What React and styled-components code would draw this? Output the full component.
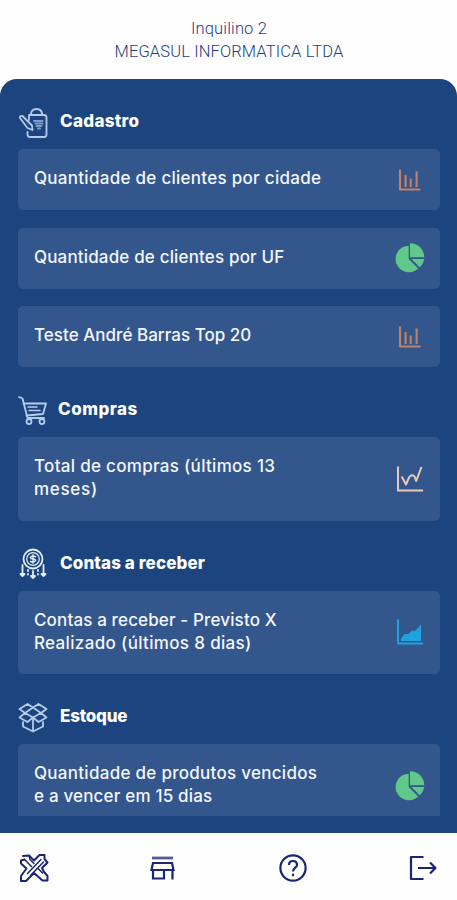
import React from 'react'
import styled, { createGlobalStyle } from 'styled-components'

const GlobalStyle = createGlobalStyle`
  * { box-sizing: border-box; }
  body {
    margin: 0;
    background: #fefefe;
    font-family: Inter, "Open Sans", sans-serif;
  }
`

const Screen = styled.div`
  display: flex;
  flex-direction: column;
  height: 900px;
  overflow: hidden;
`

const Header = styled.header`
  height: 79px;
  padding: 18px 0 0 1px;
  flex: none;
  text-align: center;
  font-family: Roboto, sans-serif;
  font-weight: 300;
  font-size: 16.5px;
  line-height: 22.5px;
  color: #1f3f7c;
`

const HeaderLine = styled.div`
  letter-spacing: ${p => p.$spacing || 0}px;
`

const Panel = styled.main`
  flex: 1;
  min-height: 0;
  padding: 0 17px 17px 18px;
  background: #1c447e;
  border-radius: 17px 17px 0 0;
`

const List = styled.div`
  height: 100%;
  overflow: hidden;
`

const SectionTitle = styled.h2`
  display: flex;
  align-items: center;
  height: 70px;
  margin: 0;
  padding-top: 17px;
  font-size: 17px;
  font-weight: 800;
  color: #fff;
  svg { flex: none; margin-right: 10px; }
`

const TitleText = styled.span`
  position: relative;
  top: -1.5px;
  left: ${p => p.$shift || 0}px;
  letter-spacing: ${p => p.$spacing || 0}px;
`

const Card = styled.div`
  display: flex;
  align-items: center;
  justify-content: space-between;
  height: ${p => (p.$tall ? 83.5 : 61)}px;
  padding: 0 14px 0 16px;
  border-radius: 5px;
  background: #33568c;
  & + & { margin-top: 17.6px; }
`

const CardText = styled.div`
  padding-bottom: 1.5px;
  font-size: 17px;
  font-weight: 500;
  line-height: 23px;
  color: #f4f7fc;
  white-space: nowrap;
`

const Line = styled.span`
  display: block;
  letter-spacing: ${p => p.$spacing || 0}px;
`

const Nav = styled.nav`
  display: flex;
  flex: none;
  align-items: center;
  justify-content: space-between;
  height: 67px;
  padding: 2px 18px 0;
  color: #1a2574;
`

const Stroke = ({ size = 32, children, ...rest }) => (
  <svg width={size} height={size} viewBox={`0 0 ${size} ${size}`} fill="none"
    stroke="currentColor" strokeWidth="1.8" strokeLinecap="round" strokeLinejoin="round" {...rest}>
    {children}
  </svg>
)

const BagIcon = () => (
  <Stroke stroke="#b5cbec">
    <path d="M11 13V8H26Q28.500 8 28.500 10.500V27.500Q28.500 30 26 30H12Q9.500 30 9.500 27.500V25" />
    <path d="M13 7.500Q13 2 18.500 2T24 7.500" />
    <path d="M2 11Q1.500 8.500 4.500 9L14 18.500L14.500 23L9.500 21Z" />
    <path d="M16 14H24.500M17.500 16.500H24.500M18.500 19H23.500M20 21.500H22" strokeWidth="2" opacity=".65" />
  </Stroke>
)

const CartIcon = () => (
  <Stroke stroke="#b5cbec">
    <path d="M1 2L4.500 3.500L9.500 23H26" />
    <path d="M5.500 8.500H28L25 19L8.500 20.500" />
    <path d="M10 12H19M11 15.500H22" strokeWidth="1.500" />
    <circle cx="11" cy="26.500" r="2.500" /><circle cx="24" cy="26.500" r="2.500" />
  </Stroke>
)

const CoinIcon = () => (
  <Stroke stroke="#e4edfa">
    <circle cx="15" cy="11" r="9.500" />
    <circle cx="15" cy="11" r="6.300" strokeWidth="1.200" />
    <path d="M17.500 8.700Q15 7.200 13 8.700T15 11T17 13.300T12.500 13.300M15 6.800V15.200" strokeWidth="1.400" />
    <path d="M4.500 17V27M2.500 26L4.500 28L6.500 26ZM25.500 17V27M23.500 26L25.500 28L27.500 26ZM15 23V29M13 28L15 30L17 28ZM10 22V23M10 26V26.500M20 22V23M20 26V26.500" />
  </Stroke>
)

const BoxIcon = () => (
  <Stroke stroke="#b5cbec">
    <path d="M1.500 7L9.500 2L15 5.500L7 11ZM28.500 7L20.500 2L15 5.500L23 11Z" />
    <path d="M7 11L1.500 15.500L9.500 20L15 15.500ZM23 11L28.500 15.500L20.500 20L15 15.500Z" />
    <path d="M5 20V24.500L15 29.500L25 24.500V20M15 17V29" />
  </Stroke>
)

const chartIcons = {
  bars: (
    <Stroke stroke="#c28165" strokeWidth="2.100" strokeLinecap="butt">
      <path d="M6 5.500V25.500H26.500M11.600 23V11M16.700 23V14.500M22.600 23V7.500" />
    </Stroke>
  ),
  pie: (
    <svg width="32" height="32" fill="#60c888">
      <path d="M14.700 3.700A13.300 13.300 0 1 0 24.200 26.500L14.700 17Z" />
      <path d="M16 1.300A14.200 14.200 0 0 1 30.300 15.300H16Z" />
      <path d="M17.400 17H30.200Q29.800 21.500 26 25.600Z" />
    </svg>
  ),
  line: (
    <Stroke stroke="#e8cabd" strokeWidth="2" strokeLinecap="butt">
      <path d="M4 3.500V27.500H29" strokeLinejoin="miter" />
      <path d="M7.700 13.500L12 21.500L15 14.500Q18 10.500 20.500 13.500L22.200 18L27.500 4" />
    </Stroke>
  ),
  area: (
    <Stroke stroke="#20a2df" strokeWidth="2" strokeLinecap="butt">
      <path d="M4 3.500V27.500H29" />
      <path d="M7 25V22.500L10.500 18L14.500 18L18 14.500L21 15L27 8.500V25Z" fill="#20a2df" stroke="none" />
    </Stroke>
  ),
}

const StoreIcon = () => (
  <Stroke strokeWidth="2.200" strokeLinecap="butt" strokeLinejoin="miter">
    <path d="M4 6H25" strokeWidth="2.800" opacity=".75" />
    <path d="M5 11H24L25.500 18H3.500ZM5 18V26.500H16V18M24.500 18V27.500" />
  </Stroke>
)

// forked-arm cross, with a band running from the lower left arm to the upper right one
const CrossIcon = () => (
  <Stroke strokeWidth="2">
    <path d="M5 4L11 3.500L16 8.500L21.500 3H26.500V7L29.500 10.500L24 16L26 20L29.500 24V28.500H24.500L16 21L8 29H3V24L8.500 16.500L3 11.500V8.500L6.500 7.500" />
    <path d="M6.500 7.500L13.500 14.500M11 3.500L12 7.500L16 11.500M9.500 21.500L23 7.500M13 23L25.500 10M20 16.500L24.500 21" strokeWidth="1.500" />
  </Stroke>
)

const HelpIcon = () => (
  <Stroke strokeWidth="2.200">
    <circle cx="16" cy="16" r="12.600" />
    <path d="M12 13Q12 9 16 9T20 13C20 15.500 16 16 16 19.500" strokeLinecap="butt" />
    <path d="M16 22.500V23.300" />
  </Stroke>
)

const LogoutIcon = () => (
  <Stroke strokeWidth="2.200" strokeLinecap="butt">
    <path d="M16.500 5H4V27H16.500M11 16H28.500M23 10.500L28.500 16L23 21.500" />
  </Stroke>
)

// each line of a card is [text, letter spacing]
const sections = [
  {
    title: 'Cadastro', icon: <BagIcon />, spacing: 0.3, cards: [
      { lines: [['Quantidade de clientes por cidade', 0.28]], chart: 'bars' },
      { lines: [['Quantidade de clientes por UF', 0.16]], chart: 'pie' },
      { lines: [['Teste André Barras Top 20', 0.03]], chart: 'bars' },
    ],
  },
  {
    title: 'Compras', icon: <CartIcon />, shift: -2, spacing: 0.5, cards: [
      { lines: [['Total de compras (últimos 13', 0.3], ['meses)', 0.7]], chart: 'line' },
    ],
  },
  {
    title: 'Contas a receber', icon: <CoinIcon />, spacing: 0.12, cards: [
      { lines: [['Contas a receber - Previsto X', 0.14], ['Realizado (últimos 8 dias)', 0.34]], chart: 'area' },
    ],
  },
  {
    title: 'Estoque', icon: <BoxIcon />, spacing: -0.22, cards: [
      { lines: [['Quantidade de produtos vencidos', 0.28], ['e a vencer em 15 dias', 0.18]], chart: 'pie' },
    ],
  },
]

const App = () => (
  <Screen>
    <GlobalStyle />
    <Header>
      <HeaderLine $spacing={0.15}>Inquilino 2</HeaderLine>
      <HeaderLine $spacing={0.12}>MEGASUL INFORMATICA LTDA</HeaderLine>
    </Header>
    <Panel>
      <List>
        {sections.map(s => (
          <section key={s.title}>
            <SectionTitle>
              {s.icon}
              <TitleText $shift={s.shift} $spacing={s.spacing}>{s.title}</TitleText>
            </SectionTitle>
            {s.cards.map(c => (
              <Card key={c.lines[0][0]} $tall={c.lines.length > 1}>
                <CardText>
                  {c.lines.map(([text, spacing]) => <Line key={text} $spacing={spacing}>{text}</Line>)}
                </CardText>
                {chartIcons[c.chart]}
              </Card>
            ))}
          </section>
        ))}
      </List>
    </Panel>
    <Nav>
      <CrossIcon />
      <StoreIcon />
      <HelpIcon />
      <LogoutIcon />
    </Nav>
  </Screen>
)

export default App
